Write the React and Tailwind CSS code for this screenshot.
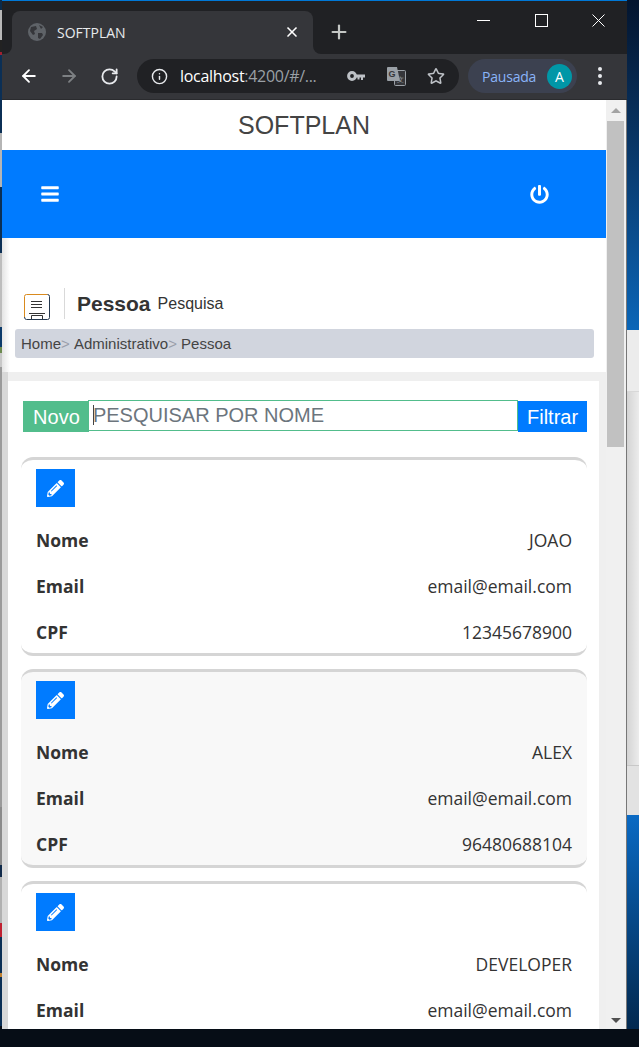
import React from 'react';
import { FaBars, FaPowerOff, FaPencilAlt, FaRegStar } from 'react-icons/fa';
import { ArrowLeft, ArrowRight, RotateCw, X, Plus, Info } from 'lucide-react';

const leftStrip = [
  ['h-[10px]', 'bg-[#0a2a4a]'], ['h-[30px]', 'bg-[#b8b8b8]'], ['h-[12px]', 'bg-[#222222]'], ['h-[3px]', 'bg-[#a02030]'],
  ['h-[78px]', 'bg-[#0b2f55]'], ['h-[54px]', 'bg-[#b5b5b5]'], ['h-[14px]', 'bg-[#0b2f55]'], ['h-[52px]', 'bg-[#0b2f55]'],
  ['h-[74px]', 'bg-[#bdbdbd]'], ['h-[20px]', 'bg-[#0b3a6a]'], ['h-[6px]', 'bg-[#6c8a50]'], ['h-[14px]', 'bg-[#c8c8c8]'],
  ['h-[440px]', 'bg-[#9a9a9a]'], ['h-[58px]', 'bg-[#8a8a8a]'], ['h-[12px]', 'bg-[#102a4a]'], ['h-[46px]', 'bg-[#b0b0b0]'],
  ['h-[14px]', 'bg-[#c02030]'], ['h-[36px]', 'bg-[#0b2f55]'], ['h-[4px]', 'bg-[#c08030]'], ['h-[49px]', 'bg-[#0b2f55]'],
];

function DesktopRight() {
  return (
    <div className="w-[12px] flex flex-col">
      <div className="h-[330px] bg-gradient-to-b from-[#04152e] to-[#0a66b8]" />
      <div className="h-[62px] bg-[#ececec] border-b border-[#d8d8d8]" />
      <div className="h-[374px] bg-gradient-to-r from-[#d4d4d4] to-[#ececec] border-b border-[#c8c8c8]" />
      <div className="h-[49px] bg-[#e2e2e2]" />
      <div className="h-[214px] bg-gradient-to-b from-[#0a6ac4] to-[#03294f]" />
    </div>
  );
}

function WindowButtons() {
  return (
    <div className="ml-auto flex self-start text-white">
      <div className="w-[58px] h-[38px] flex items-center justify-center">
        <svg width="13" height="13" viewBox="0 0 13 13"><path d="M0 6.5H13" stroke="currentColor" /></svg>
      </div>
      <div className="w-[58px] h-[38px] flex items-center justify-center">
        <svg width="13" height="13" viewBox="0 0 13 13"><rect x="0.5" y="0.5" width="12" height="12" fill="none" stroke="currentColor" /></svg>
      </div>
      <div className="w-[57px] h-[38px] flex items-center justify-center">
        <svg width="13" height="13" viewBox="0 0 13 13"><path d="M0.5 0.5L12.5 12.5M12.5 0.5L0.5 12.5" stroke="currentColor" /></svg>
      </div>
    </div>
  );
}

function TabStrip() {
  return (
    <div className="h-[53px] bg-[#202124] flex items-end shrink-0">
      <div className="w-[10px] h-[8px] bg-[#35363a]"><div className="w-full h-full bg-[#202124] rounded-br-lg" /></div>
      <div className="w-[301px] h-[43px] bg-[#35363a] rounded-t-lg flex items-center pl-[16px] pr-[13px] pb-[1px]">
        <svg width="18" height="18" viewBox="0 0 18 18" className="shrink-0">
          <circle cx="9" cy="9" r="9" fill="#5f6368" />
          <path d="M3 4 L8 3 L9 6 L6 8 L7 11 L5 12 L2 8Z M10 10 L14 10 L15 12 L12 16 L10 15Z M11 2 L15 4 L13 6Z" fill="#35363a" />
        </svg>
        <span className="ml-[11px] text-[14px] text-[#e8eaed] font-['Open_Sans',sans-serif]">SOFTPLAN</span>
        <X size={16} strokeWidth={2.5} className="ml-auto text-white" />
      </div>
      <div className="w-[10px] h-[8px] bg-[#35363a]"><div className="w-full h-full bg-[#202124] rounded-bl-lg" /></div>
      <Plus size={22} strokeWidth={2.4} className="ml-[5px] mb-[11px] text-[#c4c7c5]" />
      <WindowButtons />
    </div>
  );
}

function KeyIcon() {
  return (
    <svg width="18" height="10" viewBox="0 0 18 10">
      <circle cx="5" cy="5" r="3.4" fill="none" stroke="#bdc1c6" strokeWidth="3" />
      <path d="M8 3.5H18V6.5H16V9H14V6.5H12.5V8.5H10.5V6.5H8Z" fill="#bdc1c6" />
    </svg>
  );
}

function TranslateIcon() {
  return (
    <svg width="19" height="19" viewBox="0 0 19 19">
      <rect x="7.5" y="3.5" width="11" height="15" rx="1" fill="#35363a" stroke="#9aa0a6" />
      <path d="M1 0 H10 L13 14 H1 Q0 14 0 13 V1 Q0 0 1 0Z" fill="#9aa0a6" />
      <text x="1.5" y="10" fontSize="9" fontWeight="700" fill="#35363a" fontFamily="Liberation Sans, sans-serif">G</text>
      <text x="10" y="15" fontSize="7" fill="#9aa0a6" fontFamily="Liberation Sans, sans-serif">文</text>
    </svg>
  );
}

function Toolbar() {
  return (
    <div className="h-[46px] bg-[#35363a] border-b border-[#2a2b2e] flex items-center shrink-0 pb-[1px]">
      <ArrowLeft size={20} strokeWidth={2.2} className="ml-[17px] text-white" />
      <ArrowRight size={20} strokeWidth={2.2} className="ml-[20px] text-[#7d8083]" />
      <RotateCw size={19} strokeWidth={2.3} className="ml-[21px] text-[#e8eaed]" />
      <div className="ml-[18px] w-[322px] h-[34px] rounded-full bg-[#202124] flex items-center pl-[14px] pr-[14px]">
        <Info size={17} strokeWidth={2} className="text-[#e8eaed]" />
        <span className="ml-[12px] text-[16px] text-white font-['Open_Sans',sans-serif] tracking-[-0.3px]">localhost<span className="text-[#9aa0a6]">:4200/#/...</span></span>
        <span className="ml-auto flex"><KeyIcon /></span>
        <span className="ml-[22px] flex"><TranslateIcon /></span>
        <FaRegStar size={18} className="ml-[21px] text-[#bdc1c6]" />
      </div>
      <div className="ml-[9px] w-[109px] h-[34px] rounded-full bg-[#3c4150] flex items-center pl-[14px]">
        <span className="text-[14px] text-[#8ab4f8] font-['Open_Sans',sans-serif] tracking-[-0.2px]">Pausada</span>
        <span className="ml-auto mr-[5px] w-[25px] h-[25px] rounded-full bg-[#0097a7] text-white text-[14px] flex items-center justify-center font-['Open_Sans',sans-serif]">A</span>
      </div>
      <div className="ml-[21px] flex flex-col gap-[3px]">
        <span className="w-[4px] h-[4px] rounded-full bg-[#e8eaed]" />
        <span className="w-[4px] h-[4px] rounded-full bg-[#e8eaed]" />
        <span className="w-[4px] h-[4px] rounded-full bg-[#e8eaed]" />
      </div>
    </div>
  );
}

function PageIcon() {
  return (
    <svg width="26" height="26" viewBox="0 0 26 26" fill="none">
      <path d="M0.5 23 V2.5 Q0.5 0.5 2.5 0.5 H23.5" stroke="#d98a1e" />
      <path d="M23.5 0.5 Q25.5 0.5 25.5 2.5 V23.5 Q25.5 25.5 23.5 25.5 H2.5 Q0.5 25.5 0.5 23" stroke="#24384f" />
      <path d="M7 7.5 H18 M7 10.5 H18 M7 13.5 H18" stroke="#333333" />
      <path d="M5 19.5 H21 M7.5 25 V21.5 H18.5 V25" stroke="#333333" />
    </svg>
  );
}

function Row({ label, value }) {
  return (
    <div className="h-[24px] flex items-center justify-between">
      <span className="font-bold">{label}</span>
      <span className="font-normal">{value}</span>
    </div>
  );
}

function PersonCard({ nome, email, cpf, shaded }) {
  return (
    <div className={`shrink-0 h-[199px] border-y-[3px] border-[#d5d5d5] rounded-[12px] py-[9px] px-[15px] ${shaded ? 'bg-[#f8f8f8]' : 'bg-white'}`}>
      <div className="w-[39px] h-[38px] bg-[#007bff] flex items-center justify-center text-white">
        <FaPencilAlt size={17} />
      </div>
      <div className="mt-[21px] flex flex-col gap-[22px] text-[17.5px] text-[#333333] font-['Open_Sans',sans-serif]">
        <Row label="Nome" value={nome} />
        <Row label="Email" value={email} />
        {cpf && <Row label="CPF" value={cpf} />}
      </div>
    </div>
  );
}

function Page() {
  return (
    <div className="flex-1 min-w-0 h-full overflow-hidden bg-[#efefef] font-['Liberation_Sans',sans-serif]">
      <div className="h-[50px] pt-[1px] bg-white flex items-center justify-center text-[25px] text-[#444444]">SOFTPLAN</div>
      <div className="h-[88px] bg-[#007bff] flex items-center justify-between pl-[38px] pr-[57px] text-white">
        <FaBars size={20} />
        <FaPowerOff size={19} />
      </div>
      <div className="h-[134px] bg-[linear-gradient(90deg,#e4e4e4,#ffffff_8px)] px-[13px] pt-[50px]">
        <div className="h-[41px] flex items-start">
          <div className="ml-[9px] mt-[6px]"><PageIcon /></div>
          <div className="ml-[14px] w-px h-[31px] bg-[#d9d9d9]" />
          <div className="ml-[12px] h-[31px] flex items-center text-[#333333]">
            <span className="text-[21px] font-bold">Pessoa</span>
            <span className="ml-[7px] mt-[1px] text-[16px]">Pesquisa</span>
          </div>
        </div>
        <div className="h-[29px] w-[579px] pt-[1px] bg-[#d1d5de] rounded-[3px] flex items-center pl-[6px] text-[15px] text-[#444444]">
          Home<span className="text-[#9a9eaa]">&gt;</span>&nbsp;Administrativo<span className="text-[#9a9eaa]">&gt;</span>&nbsp;Pessoa
        </div>
      </div>
      <div className="flex h-[657px]">
        <div className="w-[6px] bg-[#d8d8d8] shrink-0" />
        <div className="w-[591px] shrink-0 mt-[9px] bg-white pl-[13px] pr-[12px] pt-[19px] flex flex-col gap-[13px] overflow-hidden">
          <div className="h-[32px] flex items-center pl-[2px] shrink-0 mb-[12px] text-[20px]">
            <div className="w-[66px] h-[31px] mt-[1px] pl-[1px] bg-[#52bd8c] text-white flex items-center justify-center">Novo</div>
            <div className="w-[431px] -ml-px h-[31px] -mt-px border border-[#52bd8c] bg-white flex items-center pl-[4px] pb-[2px] text-[#6c757d]">
              <span className="w-px h-[20px] bg-[#444444] -mr-px" />
              PESQUISAR POR NOME
            </div>
            <div className="w-[69px] h-[31px] mt-[1px] bg-[#007bff] text-white flex items-center justify-center">Filtrar</div>
          </div>
          <PersonCard nome="JOAO" email="email@email.com" cpf="12345678900" />
          <PersonCard nome="ALEX" email="email@email.com" cpf="96480688104" shaded />
          <PersonCard nome="DEVELOPER" email="email@email.com" />
        </div>
      </div>
    </div>
  );
}

function Scrollbar() {
  return (
    <div className="w-[21px] shrink-0 h-full bg-[#f0f0f0] border-r border-[#777777] flex flex-col items-center pr-[1px]">
      <div className="h-[21px] flex items-center justify-center">
        <div className="w-0 h-0 border-x-[5px] border-x-transparent border-b-[5px] border-b-[#a3a3a3]" />
      </div>
      <div className="w-[17px] h-[326px] bg-[#c1c1c1]" />
      <div className="mt-auto h-[17px] flex items-center justify-center">
        <div className="w-0 h-0 border-x-[5px] border-x-transparent border-t-[5px] border-t-[#505050]" />
      </div>
    </div>
  );
}

export default function App() {
  return (
    <div className="w-[639px] h-[1047px] overflow-hidden flex flex-col bg-[#060d16]">
      <div className="h-[1029px] flex shrink-0">
        <div className="w-[2px] flex flex-col shrink-0">
          {leftStrip.map(([h, c], i) => <div key={i} className={`${h} ${c}`} />)}
        </div>
        <div className="w-[625px] shrink-0 flex flex-col">
          <div className="h-px bg-[#0078d7] shrink-0" />
          <TabStrip />
          <Toolbar />
          <div className="h-[929px] flex">
            <Page />
            <Scrollbar />
          </div>
        </div>
        <DesktopRight />
      </div>
    </div>
  );
}
